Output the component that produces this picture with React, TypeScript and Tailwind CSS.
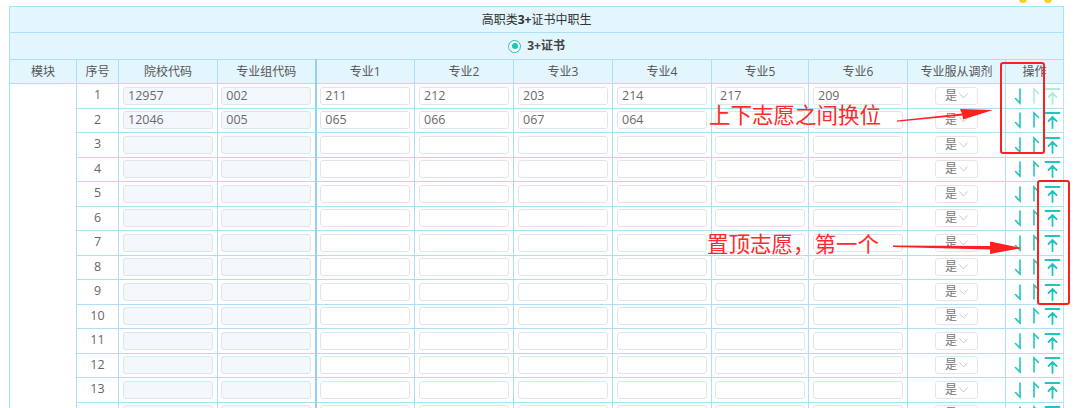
import React from 'react';

const rows = [
  { school: '12957', group: '002', majors: ['211', '212', '203', '214', '217', '209'] },
  { school: '12046', group: '005', majors: ['065', '066', '067', '064', '', ''] },
  ...Array.from({ length: 12 }, () => ({ school: '', group: '', majors: ['', '', '', '', '', ''] })),
];

const majorCols = ['专业1', '专业2', '专业3', '专业4', '专业5', '专业6'];
const widths = [67, 42, 99, 98, 99, 99, 99, 99, 97, 99, 98, 58];

const line = 'border border-[#addff6]';

function DownHarpoon({ on }: { on: boolean }) {
  return (
    <svg width="10" height="18" viewBox="0 0 10 18" fill="none" stroke={on ? '#22c4be' : '#aeeae6'} strokeWidth="1.6" strokeLinecap="round">
      <path d="M7 2v14L2.5 11.5" />
    </svg>
  );
}

function UpHarpoon({ on }: { on: boolean }) {
  return (
    <svg width="10" height="18" viewBox="0 0 10 18" fill="none" stroke={on ? '#22c4be' : '#aeeae6'} strokeWidth="1.6" strokeLinecap="round">
      <path d="M3 16V2l4.5 4.5" />
    </svg>
  );
}

function ToTop({ on }: { on: boolean }) {
  return (
    <svg width="17" height="18" viewBox="0 0 17 18" fill="none" stroke={on ? '#22c4be' : '#aeeae6'} strokeWidth="1.8" strokeLinecap="round">
      <path d="M1.5 2h14M8.5 17V6M4.5 10l4-4 4 4" />
    </svg>
  );
}

function Box({ value, locked }: { value: string; locked?: boolean }) {
  return (
    <div
      className={`mx-auto h-[18px] w-[90px] rounded-[3px] border border-[#e1e4e8] px-[4px] text-left text-[12.5px] leading-[16px] text-[#6a6a6a] ${
        locked ? 'bg-[#f3f8fd]' : 'bg-white'
      }`}
    >
      {value}
    </div>
  );
}

export default function App() {
  return (
    <div
      className="relative h-[408px] w-[1080px] overflow-hidden bg-white"
      style={{ fontFamily: '"Open Sans", "Noto Sans CJK SC", sans-serif' }}
    >
      <div className="pl-[9px] pt-[6px]">
        <table className="table-fixed border-collapse text-[12px] text-[#555]" style={{ width: 1055 }}>
          <colgroup>
            {widths.map((w, i) => (
              <col key={i} style={{ width: w }} />
            ))}
          </colgroup>
          <thead>
            <tr className="h-[26px] bg-[#e3f5fd]">
              <th colSpan={12} className={`${line} font-normal text-[#333]`}>
                高职类<span className="font-bold">3+</span>证书中职生
              </th>
            </tr>
            <tr className="h-[27px] bg-[#e3f5fd]">
              <th colSpan={12} className={`${line} font-normal`}>
                <div className="flex items-center justify-center gap-[6px]">
                  <span className="flex h-[13px] w-[13px] items-center justify-center rounded-full border border-[#1fc2bb] bg-white">
                    <span className="h-[6px] w-[6px] rounded-full bg-[#1fc2bb]" />
                  </span>
                  <span className="font-bold text-[#444]">3+证书</span>
                </div>
              </th>
            </tr>
            <tr className="h-[24px] bg-[#e3f5fd]">
              {['模块', '序号', '院校代码', '专业组代码', ...majorCols, '专业服从调剂', '操作'].map((h, i) => (
                <th key={h} className={`${line} font-normal ${i === 4 ? 'border-l-2 border-l-[#96cff3]' : ''}`}>
                  {h}
                </th>
              ))}
            </tr>
          </thead>
          <tbody>
            {rows.map((r, i) => (
              <tr key={i} className="h-[24.5px]">
                {i === 0 && <td rowSpan={rows.length} className={`${line} border-l-[#9fe3ec]`} />}
                <td className={`${line} text-center text-[12.5px] text-[#666]`}>{i + 1}</td>
                <td className={line}>
                  <Box value={r.school} locked />
                </td>
                <td className={line}>
                  <Box value={r.group} locked />
                </td>
                {r.majors.map((m, j) => (
                  <td key={j} className={`${line} ${j === 0 ? 'border-l-2 border-l-[#96cff3]' : ''}`}>
                    <Box value={m} />
                  </td>
                ))}
                <td className={line}>
                  <div className="mx-auto flex h-[18px] w-[43px] items-center justify-center gap-[2px] rounded-[3px] border border-[#e6e6e6] text-[12px] text-[#777]">
                    是
                    <svg width="9" height="6" viewBox="0 0 9 6" fill="none" stroke="#c8c8c8" strokeWidth="1">
                      <path d="M0.5 0.5l4 4.5 4-4.5" />
                    </svg>
                  </div>
                </td>
                <td className={`${line} border-r-[#b5e8ea]`}>
                  <div className="flex items-center pl-[7px]">
                    <DownHarpoon on />
                    <span className="w-[8px]" />
                    <UpHarpoon on={i > 0} />
                    <span className="w-[3px]" />
                    <ToTop on={i > 0} />
                  </div>
                </td>
              </tr>
            ))}
          </tbody>
        </table>
      </div>

      {/* decorations at top right */}
      <span className="absolute left-[1019px] top-[-5px] h-[8px] w-[8px] rounded-full bg-[#f5d31a]" />
      <span className="absolute left-[1044px] top-[-5px] h-[8px] w-[8px] rounded-full bg-[#f5d31a]" />

      {/* annotations */}
      <div className="absolute left-[1000px] top-[62px] h-[92px] w-[45px] rounded-[3px] border-2 border-[#ff1f1f]" />
      <div className="absolute left-[1037px] top-[180px] h-[125px] w-[33px] rounded-[3px] border-2 border-[#ff1f1f]" />

      <div
        className="absolute left-[709px] top-[101px] text-[21.5px] leading-[26px] text-[#ff2a2a]"
        style={{ fontFamily: '"Noto Sans CJK SC", sans-serif' }}
      >
        上下志愿之间换位
      </div>
      <div
        className="absolute left-[707px] top-[230px] text-[21.5px] leading-[26px] text-[#ff2a2a]"
        style={{ fontFamily: '"Noto Sans CJK SC", sans-serif' }}
      >
        置顶志愿，第一个
      </div>

      <svg className="absolute left-0 top-0" width="1080" height="408" viewBox="0 0 1080 408" fill="#ff2020">
        <path d="M897 120.5 L962 113.5 L960 109 L993 110 L963 119.5 L962.5 115.5 L897 121.8 Z" />
        <path d="M893 245.5 L990 246 L990 241.5 L1022 248 L990 254 L990 249.5 L893 247 Z" />
      </svg>
    </div>
  );
}
